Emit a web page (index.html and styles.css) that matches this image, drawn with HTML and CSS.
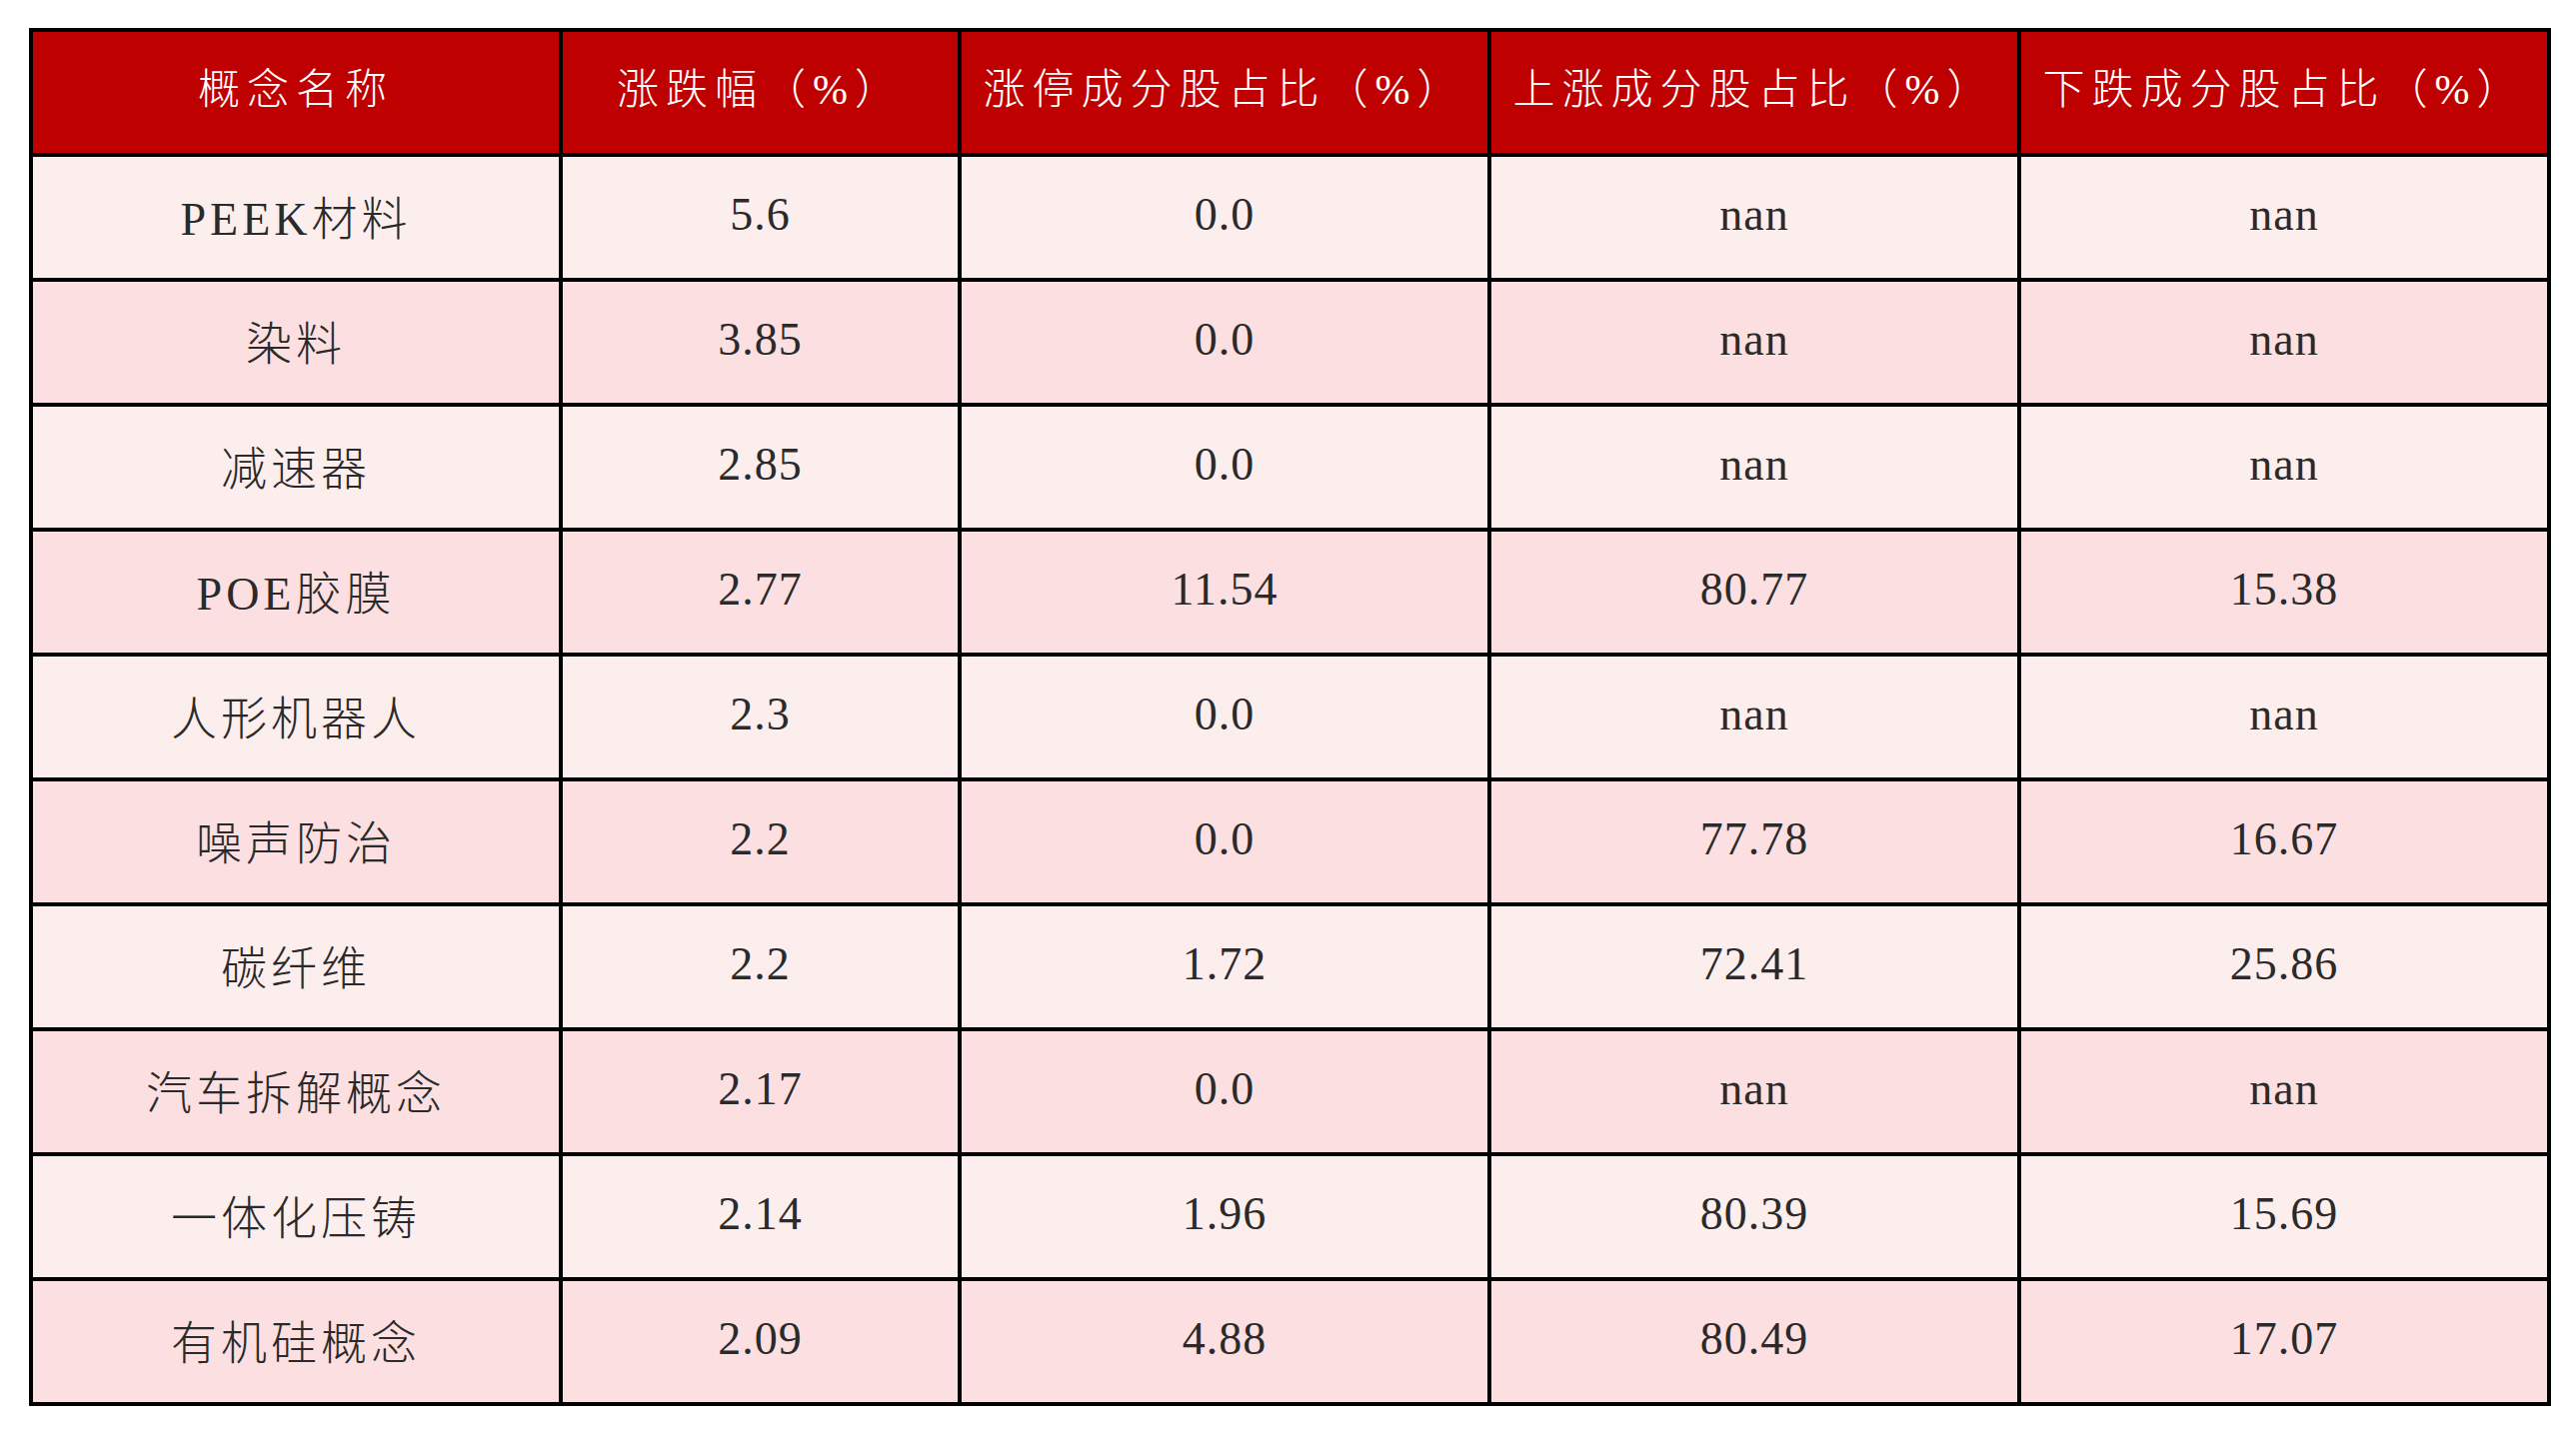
FILE: index.html
```html
<!DOCTYPE html>
<html lang="zh-CN">
<head>
<meta charset="utf-8">
<title>概念板块</title>
<link rel="stylesheet" href="styles.css">
</head>
<body>
<table class="data-table">
  <colgroup>
    <col class="col-name">
    <col class="col-change">
    <col class="col-wide">
    <col class="col-wide">
    <col class="col-wide">
  </colgroup>
  <thead>
    <tr>
      <th>概念名称</th>
      <th>涨跌幅（%）</th>
      <th>涨停成分股占比（%）</th>
      <th>上涨成分股占比（%）</th>
      <th>下跌成分股占比（%）</th>
    </tr>
  </thead>
  <tbody>
    <tr><td class="name">PEEK材料</td><td>5.6</td><td>0.0</td><td>nan</td><td>nan</td></tr>
    <tr><td class="name">染料</td><td>3.85</td><td>0.0</td><td>nan</td><td>nan</td></tr>
    <tr><td class="name">减速器</td><td>2.85</td><td>0.0</td><td>nan</td><td>nan</td></tr>
    <tr><td class="name">POE胶膜</td><td>2.77</td><td>11.54</td><td>80.77</td><td>15.38</td></tr>
    <tr><td class="name">人形机器人</td><td>2.3</td><td>0.0</td><td>nan</td><td>nan</td></tr>
    <tr><td class="name">噪声防治</td><td>2.2</td><td>0.0</td><td>77.78</td><td>16.67</td></tr>
    <tr><td class="name">碳纤维</td><td>2.2</td><td>1.72</td><td>72.41</td><td>25.86</td></tr>
    <tr><td class="name">汽车拆解概念</td><td>2.17</td><td>0.0</td><td>nan</td><td>nan</td></tr>
    <tr><td class="name">一体化压铸</td><td>2.14</td><td>1.96</td><td>80.39</td><td>15.69</td></tr>
    <tr><td class="name">有机硅概念</td><td>2.09</td><td>4.88</td><td>80.49</td><td>17.07</td></tr>
  </tbody>
</table>
</body>
</html>
```

FILE: styles.css
```css
html, body {
  margin: 0;
  padding: 0;
  background: #ffffff;
}

body {
  padding: 28px 0 0 29px;
  font-family: "Liberation Serif", "Noto Sans CJK SC", serif;
}

.data-table {
  border-collapse: collapse;
  table-layout: fixed;
  width: 2519px;
  border: 4px solid #000000;
}

.col-name { width: 530px; }
.col-change { width: 399px; }
.col-wide { width: 530px; }

.data-table th,
.data-table td {
  border: 4px solid #000000;
  height: 115px;
  padding: 0 0 6px 0;
  text-align: center;
  vertical-align: middle;
  white-space: nowrap;
}

.data-table th {
  background: #bf0000;
  color: #ffffff;
  font-weight: 300;
  font-size: 42px;
  letter-spacing: 7px;
  padding-bottom: 14px;
  height: 107px;
}

.data-table td {
  color: #2a2a2a;
  font-size: 46px;
  font-weight: 300;
  letter-spacing: 1px;
}

.data-table td.name {
  letter-spacing: 4px;
}

.data-table tbody tr:nth-child(odd) td {
  background: #fdeeee;
}

.data-table tbody tr:nth-child(even) td {
  background: #fcdfe0;
}
```
